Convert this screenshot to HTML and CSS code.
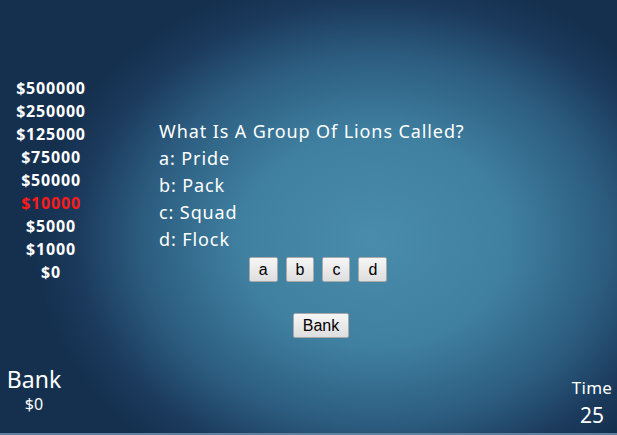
FILE: index.html
```html
<!DOCTYPE html>
<html>
<head>
<meta charset="utf-8">
<link rel="stylesheet" href="styles.css">
</head>
<body>
<div class="screen">
  <div class="top">
    <ul class="ladder">
      <li>$500000</li>
      <li>$250000</li>
      <li>$125000</li>
      <li>$75000</li>
      <li>$50000</li>
      <li class="current">$10000</li>
      <li>$5000</li>
      <li>$1000</li>
      <li>$0</li>
    </ul>
    <div class="quiz">
      <div class="question">What Is A Group Of Lions Called?</div>
      <div class="answer">a: Pride</div>
      <div class="answer">b: Pack</div>
      <div class="answer">c: Squad</div>
      <div class="answer">d: Flock</div>
      <div class="choices">
        <button class="btn">a</button>
        <button class="btn">b</button>
        <button class="btn">c</button>
        <button class="btn">d</button>
      </div>
      <div class="bank-row">
        <button class="btn">Bank</button>
      </div>
    </div>
  </div>
  <div class="bottom">
    <div class="bank">
      <div class="bank-label">Bank</div>
      <div class="bank-value">$0</div>
    </div>
    <div class="time">
      <div class="time-label">Time</div>
      <div class="time-value">25</div>
    </div>
  </div>
</div>
</body>
</html>
```

FILE: styles.css
```css
html, body {
  margin: 0;
  padding: 0;
}
body {
  background: #5f7f9f;
  height: 435px;
  overflow: hidden;
  font-family: "Noto Sans", "Open Sans", sans-serif;
  color: #ffffff;
}
.screen {
  height: 433px;
  display: flex;
  flex-direction: column;
  background: radial-gradient(ellipse 340px 270px at 375px 240px, #4a8cab 0%, #3f7fa0 40%, #2c5d80 68%, #1b3a5c 88%, #15304f 100%);
  background-color: #15304f;
}
.top {
  display: flex;
  flex: 1;
}
.ladder {
  list-style: none;
  margin: 0;
  padding: 77px 0 0 0;
  width: 102px;
  text-align: center;
  font-weight: bold;
  font-size: 16px;
  line-height: 23px;
  letter-spacing: 0.8px;
}
.ladder .current {
  color: #ff1a1a;
}
.quiz {
  margin-left: 57px;
  padding-top: 118px;
  width: 318px;
  font-size: 18px;
  line-height: 27px;
  letter-spacing: 0.9px;
}
.choices {
  display: flex;
  justify-content: center;
  gap: 8px;
  margin-top: 4px;
  letter-spacing: 0;
}
.bank-row {
  display: flex;
  justify-content: center;
  margin-top: 31px;
  padding-left: 6px;
  letter-spacing: 0;
}
.btn {
  font-family: "Liberation Sans", Arial, sans-serif;
  font-size: 16px;
  height: 25px;
  min-width: 28px;
  padding: 0 9px;
  border: 1px solid #a9a9a9;
  border-radius: 2px;
  background: linear-gradient(#f6f6f6, #dedede);
  color: #000;
}
.bottom {
  display: flex;
  justify-content: space-between;
  align-items: flex-end;
  padding: 0 0 3px 0;
}
.bank {
  width: 68px;
  text-align: center;
  padding-bottom: 15px;
}
.bank-label {
  font-size: 23px;
  line-height: 28px;
}
.bank-value {
  font-size: 16px;
  line-height: 22px;
}
.time {
  width: 50px;
  text-align: center;
}
.time-label {
  font-size: 17px;
  line-height: 24px;
  letter-spacing: 0.3px;
}
.time-value {
  font-size: 21px;
  line-height: 30px;
}
```
